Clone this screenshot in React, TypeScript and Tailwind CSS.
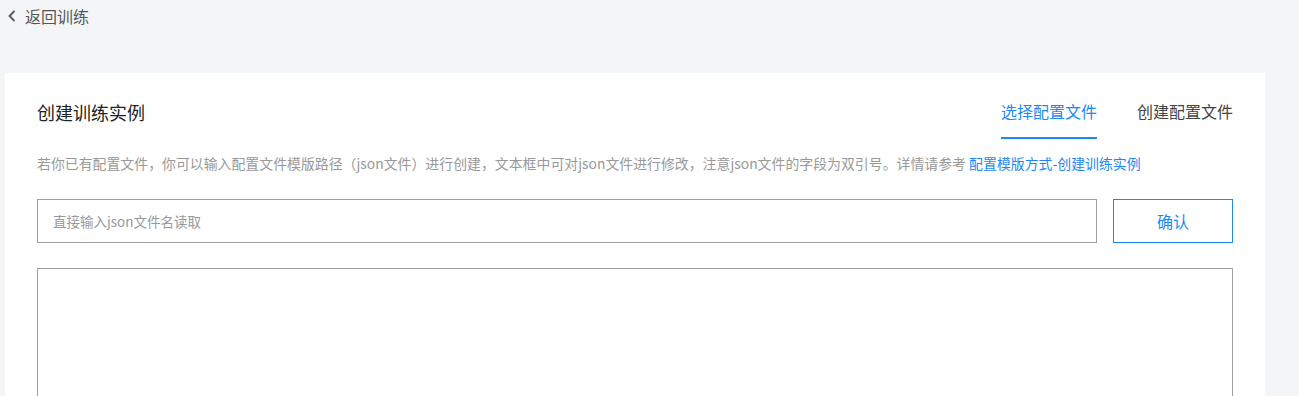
import React from "react";

export default function App() {
  const font = { fontFamily: '"Microsoft YaHei", "Noto Sans CJK SC", "Liberation Sans", sans-serif' };
  return (
    <div className="min-h-[396px] w-full bg-[#f4f5f7]" style={font}>
      <div className="flex h-[31px] items-center pl-[7px] text-[16px] text-[#555]">
        <svg width="10" height="14" viewBox="0 0 10 14" className="mr-[8px]">
          <path d="M7.5 2 L2.5 7 L7.5 12" fill="none" stroke="#555" strokeWidth="1.8" />
        </svg>
        <span>返回训练</span>
      </div>
      <div className="ml-[5px] mt-[42px] w-[1260px] h-[323px] overflow-hidden bg-white px-[32px]">
        <div className="flex items-start justify-between pt-[26px]">
          <div className="pt-[1px] text-[18px] leading-[24px] text-[#222]">创建训练实例</div>
          <div className="flex gap-[40px] text-[16px] leading-[24px]">
            <div className="border-b-2 border-[#1c88f6] pb-[14px] text-[#1c88f6]">选择配置文件</div>
            <div className="text-[#444]">创建配置文件</div>
          </div>
        </div>
        <div className="mt-[14px] whitespace-nowrap text-[13.9px] leading-[20px] text-[#999]">
          若你已有配置文件，你可以输入配置文件模版路径（json文件）进行创建，文本框中可对json文件进行修改，注意json文件的字段为双引号。详情请参考{" "}
          <span className="text-[#1c88f6]">配置模版方式-创建训练实例</span>
        </div>
        <div className="mt-[26px] flex gap-[16px]">
          <div className="flex h-[44px] flex-1 items-center border border-[#a0a0a0] pl-[15px] text-[13.5px] text-[#999]">
            直接输入json文件名读取
          </div>
          <div className="flex h-[44px] w-[120px] items-center justify-center border border-[#1c88f6] text-[16px] text-[#1c88f6]">
            确认
          </div>
        </div>
        <div className="mt-[25px] h-[200px] border border-[#a0a0a0]"></div>
      </div>
    </div>
  );
}
